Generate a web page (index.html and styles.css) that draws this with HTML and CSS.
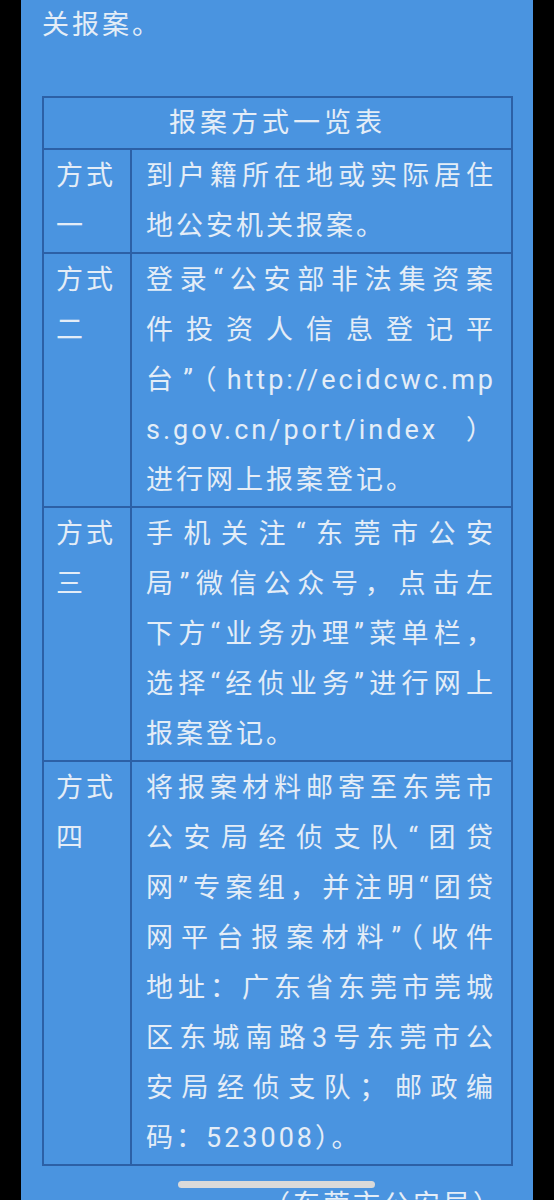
FILE: index.html
```html
<!DOCTYPE html>
<html lang="zh-CN">
<head>
    <meta charset="utf-8">
    <title>报案方式一览表</title>
    <link rel="stylesheet" href="styles.css">
</head>
<body>
    <div class="page">
        <p class="lead">关报案。</p>

        <table class="report">
            <tr>
                <th colspan="2">报案方式一览表</th>
            </tr>
            <tr>
                <td class="kind">方式<br>一</td>
                <td class="detail">
                    <span class="ln">到户籍所在地或实际居住</span>
                    <span class="ln">地公安机关报案。</span>
                </td>
            </tr>
            <tr>
                <td class="kind">方式<br>二</td>
                <td class="detail">
                    <span class="ln">登录“公安部非法集资案</span>
                    <span class="ln">件投资人信息登记平</span>
                    <span class="ln">台”（http://ecidcwc.mp</span>
                    <span class="ln">s.gov.cn/port/index &nbsp;）</span>
                    <span class="ln">进行网上报案登记。</span>
                </td>
            </tr>
            <tr>
                <td class="kind">方式<br>三</td>
                <td class="detail">
                    <span class="ln">手机关注“东莞市公安</span>
                    <span class="ln">局”微信公众号，点击左</span>
                    <span class="ln">下方“业务办理”菜单栏，</span>
                    <span class="ln">选择“经侦业务”进行网上</span>
                    <span class="ln">报案登记。</span>
                </td>
            </tr>
            <tr>
                <td class="kind">方式<br>四</td>
                <td class="detail">
                    <span class="ln">将报案材料邮寄至东莞市</span>
                    <span class="ln">公安局经侦支队“团贷</span>
                    <span class="ln">网”专案组，并注明“团贷</span>
                    <span class="ln">网平台报案材料”（收件</span>
                    <span class="ln">地址：广东省东莞市莞城</span>
                    <span class="ln">区东城南路3号东莞市公</span>
                    <span class="ln">安局经侦支队；邮政编</span>
                    <span class="ln">码：523008）。</span>
                </td>
            </tr>
        </table>

        <p class="sign">（东莞市公安局）</p>
    </div>

    <div class="home-bar"></div>
</body>
</html>
```

FILE: styles.css
```css
body {
    margin: 0;
    background-color: #000;
    font-family: Roboto, "Noto Sans CJK SC", sans-serif;
}
.page {
    margin: 0 21px;
    padding: 0 20px 0 21px;
    background-color: #4a94e0;
    color: #e4edf7;
    font-size: 27px;
    line-height: 50px;
    letter-spacing: 3px;
}
.lead {
    margin: 0 0 46px;
}
.report {
    width: 100%;
    border-collapse: collapse;
    border: 2px solid #2c60a6;
}
.report th,
.report td {
    border: 2px solid #2c60a6;
    vertical-align: top;
}
.report th {
    padding: 0;
    font-weight: normal;
    text-align: center;
    letter-spacing: 4px;
}
.kind {
    width: 74px;
    padding: 1px 0 1px 12px;
}
.detail {
    padding: 1px 15px 1px 14px;
}
.ln {
    display: block;
    text-align: justify;
    text-align-last: justify;
}
.ln:last-child {
    text-align-last: auto;
}
.sign {
    margin: 14px 0 0;
    padding-right: 10px;
    text-align: right;
}
.home-bar {
    position: fixed;
    left: 178px;
    top: 1181px;
    width: 197px;
    height: 7px;
    border-radius: 4px;
    background-color: #d9d9d9;
}
```
